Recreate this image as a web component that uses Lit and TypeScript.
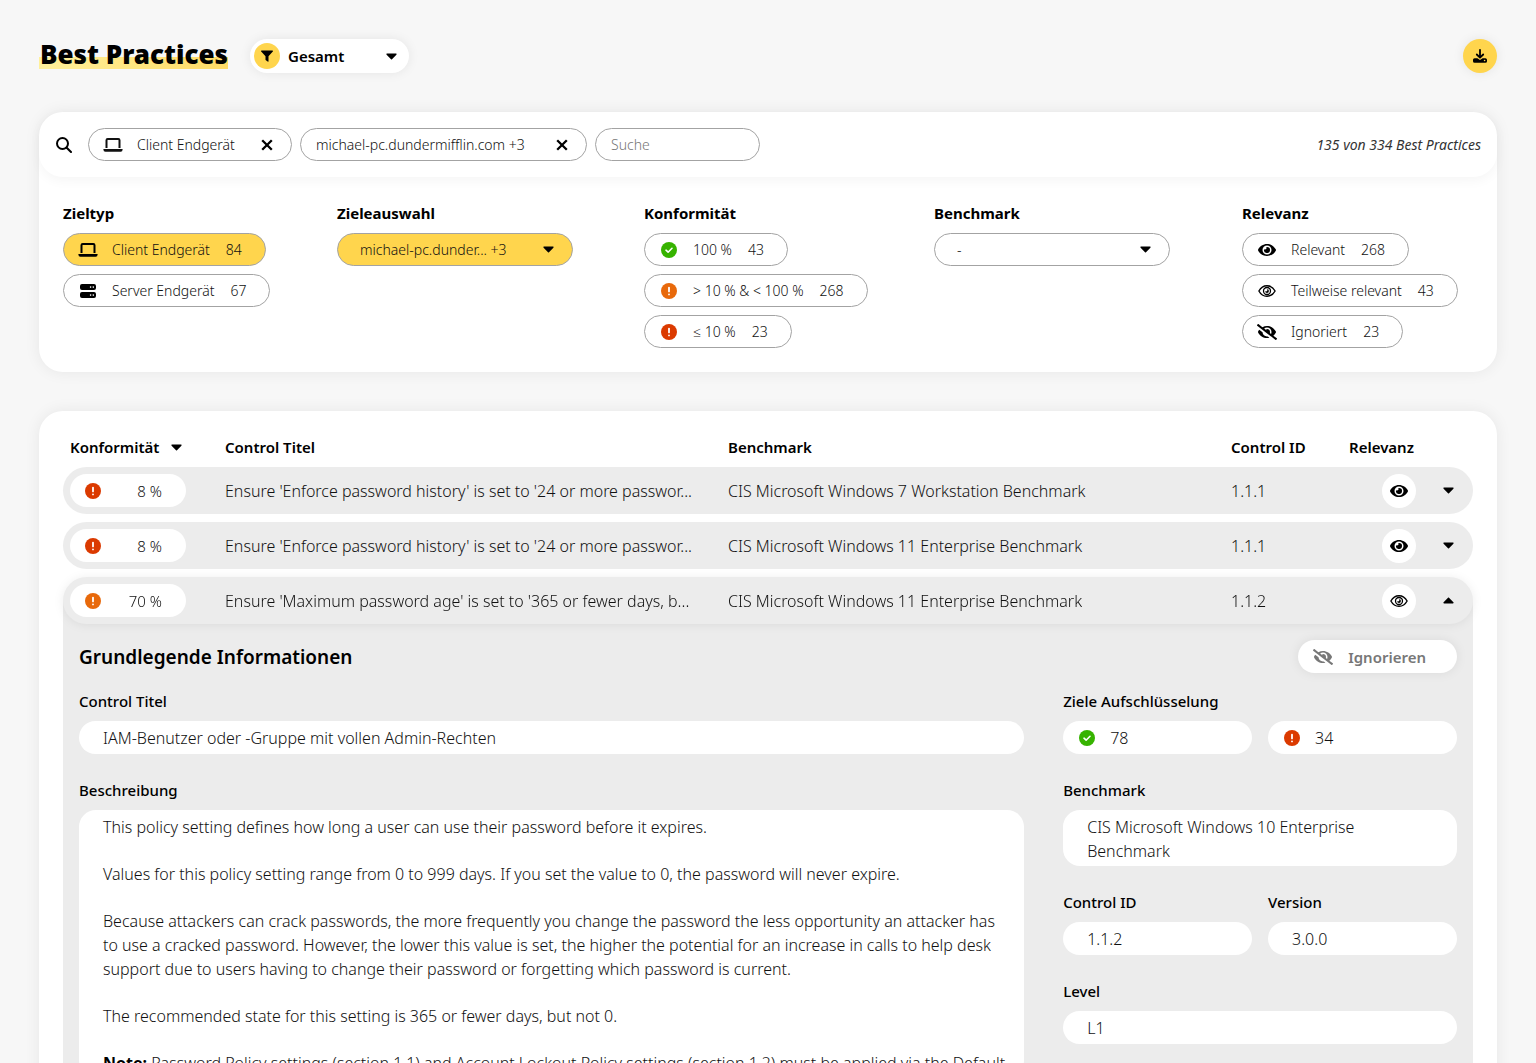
import { LitElement, html, css, svg, nothing, TemplateResult } from "lit";
import { customElement, state } from "lit/decorators.js";
import { classMap } from "lit/directives/class-map.js";

type IconDef = { box: string; w: number; h: number; body: TemplateResult };

const ICONS: Record<string, IconDef> = {
  caretDown: {
    box: "0 176 320 200", w: 11, h: 7,
    body: svg`<path d="M31.3 192h257.3c17.8 0 26.7 21.5 14.1 34.1L174.1 354.8c-7.8 7.8-20.5 7.8-28.3 0L17.2 226.1C4.6 213.5 13.5 192 31.3 192z"/>`,
  },
  caretUp: {
    box: "0 136 320 200", w: 11, h: 7,
    body: svg`<path d="M288.7 320H31.4c-17.8 0-26.7-21.5-14.1-34.1l128.6-128.7c7.8-7.8 20.5-7.8 28.3 0l128.6 128.7c12.6 12.6 3.7 34.1-14.1 34.1z"/>`,
  },
  eye: {
    box: "0 0 576 512", w: 18, h: 16,
    body: svg`<path d="M572.52 241.4C518.29 135.59 410.93 64 288 64S57.68 135.64 3.48 241.41a32.35 32.35 0 0 0 0 29.19C57.71 376.41 165.07 448 288 448s230.32-71.64 284.52-177.41a32.35 32.35 0 0 0 0-29.19zM288 400a144 144 0 1 1 144-144 143.93 143.93 0 0 1-144 144zm0-240a95.31 95.31 0 0 0-25.31 3.79 47.85 47.85 0 0 1-66.9 66.9A95.78 95.78 0 1 0 288 160z"/>`,
  },
  eyeOutline: {
    box: "0 0 18 16", w: 18, h: 16,
    body: svg`<g fill="none" stroke="currentColor"><path stroke-width="1.400" stroke-linejoin="round" d="M.9 8C2.800 4.500 5.600 2.700 9 2.700S15.200 4.500 17.100 8C15.200 11.500 12.400 13.300 9 13.300S2.800 11.500.9 8z"/><circle cx="9" cy="8" r="3.500" stroke-width="1.300"/></g><path d="M9 6.100a1.900 1.900 0 1 1-1.900 1.900A1.300 1.300 0 0 0 9 6.100z"/>`,
  },
  eyeSlash: {
    box: "0 0 640 512", w: 20, h: 16,
    body: svg`<path d="M320 400c-75.85 0-137.25-58.71-142.9-133.11L72.2 185.82c-13.79 17.3-26.48 35.59-36.72 55.59a32.35 32.35 0 0 0 0 29.19C89.71 376.41 197.07 448 320 448c26.91 0 52.87-4 77.89-10.46L346 397.39a144.13 144.13 0 0 1-26 2.61zm313.82 58.1l-110.55-85.44a331.25 331.25 0 0 0 81.25-102.07 32.35 32.35 0 0 0 0-29.19C550.29 135.59 442.93 64 320 64a308.15 308.15 0 0 0-147.32 37.7L45.46 3.37A16 16 0 0 0 23 6.18L3.37 31.45A16 16 0 0 0 6.18 53.9l588.36 454.73a16 16 0 0 0 22.46-2.81l19.64-25.27a16 16 0 0 0-2.82-22.45zm-183.72-142l-39.3-30.38A94.75 94.75 0 0 0 416 256a94.76 94.76 0 0 0-121.31-92.21A47.65 47.65 0 0 1 304 192a46.64 46.64 0 0 1-1.54 10l-73.61-56.89A142.31 142.31 0 0 1 320 112a143.92 143.92 0 0 1 144 144c0 21.63-5.29 41.79-13.9 60.11z"/>`,
  },
  laptop: {
    box: "0 0 20 16", w: 20, h: 16,
    body: svg`<path fill="none" stroke="currentColor" stroke-width="2" d="M3.5 11V3.2q0-1.2 1.2-1.2h10.6q1.2 0 1.2 1.2V11"/><path d="M.4 12h19.2v.6q0 2.2-2 2.2H2.4q-2 0-2-2.2z"/>`,
  },
  server: {
    box: "0 0 16 16", w: 16, h: 16,
    body: svg`<path fill-rule="evenodd" d="M2 1h12a2 2 0 0 1 2 2v2a2 2 0 0 1-2 2H2a2 2 0 0 1-2-2V3a2 2 0 0 1 2-2zm8.6 2.3a.8.8 0 1 0 0 1.6.8.8 0 0 0 0-1.6zm2.7 0a.8.8 0 1 0 0 1.6.8.8 0 0 0 0-1.6zM2 9h12a2 2 0 0 1 2 2v2a2 2 0 0 1-2 2H2a2 2 0 0 1-2-2v-2a2 2 0 0 1 2-2zm8.6 2.3a.8.8 0 1 0 0 1.6.8.8 0 0 0 0-1.6zm2.7 0a.8.8 0 1 0 0 1.6.8.8 0 0 0 0-1.6z"/>`,
  },
  ok: {
    box: "0 0 16 16", w: 16, h: 16,
    body: svg`<circle cx="8" cy="8" r="8" fill="#36b300"/><path fill="none" stroke="#fff" stroke-width="1.6" stroke-linecap="round" stroke-linejoin="round" d="M5 8.2l2.1 2L11 6.3"/>`,
  },
  warn: {
    box: "0 0 16 16", w: 16, h: 16,
    body: svg`<circle cx="8" cy="8" r="8" fill="#e8690b"/><path fill="none" stroke="#fff" stroke-width="1.8" stroke-linecap="round" d="M8 4.6v3.8M8 11.3v.1"/>`,
  },
  bad: {
    box: "0 0 16 16", w: 16, h: 16,
    body: svg`<circle cx="8" cy="8" r="8" fill="#db3a00"/><path fill="none" stroke="#fff" stroke-width="1.8" stroke-linecap="round" d="M8 4.6v3.8M8 11.3v.1"/>`,
  },
  search: {
    box: "0 0 16 16", w: 16, h: 16,
    body: svg`<g fill="none" stroke="currentColor" stroke-width="2"><circle cx="6.5" cy="6.5" r="5.5"/><path stroke-linecap="round" d="M10.7 10.7L15 15"/></g>`,
  },
  close: {
    box: "0 0 12 12", w: 12, h: 12,
    body: svg`<path fill="none" stroke="currentColor" stroke-width="2.3" d="M1.2 1.2l9.6 9.6M10.8 1.2L1.2 10.8"/>`,
  },
  filter: {
    box: "0 0 12 12", w: 12, h: 12,
    body: svg`<path d="M.6.5h10.800c.6 0 .8.700.4 1.100L7.500 6.200v5c0 .5-.5.700-.9.400L4.900 10.300a.8.8 0 0 1-.4-.6V6.200L.2 1.600C-.2 1.200 0 .5.6.5z"/>`,
  },
  download: {
    box: "0 0 16 16", w: 16, h: 16,
    body: svg`<path fill="none" stroke="currentColor" stroke-width="1.8" stroke-linecap="round" stroke-linejoin="round" d="M8 1.8v7.4M4.8 6.5L8 9.6l3.200-3.100"/><path fill-rule="evenodd" d="M2.600 10.200h2.800L8 12l2.600-1.800h2.800a1.600 1.600 0 0 1 1.600 1.600v1.400a1.600 1.600 0 0 1-1.600 1.600H2.600A1.600 1.600 0 0 1 1 13.200v-1.400a1.600 1.600 0 0 1 1.600-1.600zm10 1.500a.8.8 0 1 0 0 1.600.8.8 0 0 0 0-1.600z"/>`,
  },
};

const icon = (name: string) => {
  const i = ICONS[name];
  return html`<svg class="icon" width=${i.w} height=${i.h} viewBox=${i.box} fill="currentColor" aria-hidden="true">${i.body}</svg>`;
};

interface Option { id: string; icon: string; label: string; count: number }

const TARGET_TYPES: Option[] = [
  { id: "client", icon: "laptop", label: "Client Endgerät", count: 84 },
  { id: "server", icon: "server", label: "Server Endgerät", count: 67 },
];
const CONFORMITY: Option[] = [
  { id: "full", icon: "ok", label: "100 %", count: 43 },
  { id: "part", icon: "warn", label: "> 10 % & < 100 %", count: 268 },
  { id: "low", icon: "bad", label: "≤ 10 %", count: 23 },
];
const RELEVANCE: Option[] = [
  { id: "relevant", icon: "eye", label: "Relevant", count: 268 },
  { id: "partial", icon: "eyeOutline", label: "Teilweise relevant", count: 43 },
  { id: "ignored", icon: "eyeSlash", label: "Ignoriert", count: 23 },
];

const ROWS = [
  { status: "bad", value: "8 %", title: "Ensure 'Enforce password history' is set to '24 or more passwor...", benchmark: "CIS Microsoft Windows 7 Workstation Benchmark", id: "1.1.1", eye: "eye" },
  { status: "bad", value: "8 %", title: "Ensure 'Enforce password history' is set to '24 or more passwor...", benchmark: "CIS Microsoft Windows 11 Enterprise Benchmark", id: "1.1.1", eye: "eye" },
  { status: "warn", value: "70 %", title: "Ensure 'Maximum password age' is set to '365 or fewer days, b...", benchmark: "CIS Microsoft Windows 11 Enterprise Benchmark", id: "1.1.2", eye: "eyeOutline" },
];

@customElement("app-root")
export class AppRoot extends LitElement {
  @state() private active = new Set(["client"]);
  @state() private open = 2;

  static styles = css`
    :host {
      display: block;
      min-height: 100vh;
      box-sizing: border-box;
      padding: 39px;
      background: #f7f7f7;
      color: #111;
      font: 300 16px/24px "Noto Sans", "Open Sans", sans-serif;
    }
    * { box-sizing: border-box; }
    button, input, select { font: inherit; color: inherit; margin: 0; }
    button { padding: 0; border: 0; background: none; cursor: pointer; }
    h1, h2, h3, p { margin: 0; }
    .icon { display: block; flex: none; }

    .top { display: flex; align-items: flex-start; gap: 22px; margin-bottom: 39px; }
    h1 {
      padding-left: 1px;
      color: #000;
      font-size: 26px;
      font-weight: 900;
      line-height: 30px;
      background: linear-gradient(90deg, #fff09b, #ffdb66) left bottom / 100% 12px no-repeat;
    }
    .view {
      display: grid;
      width: 159px;
      height: 34px;
      border-radius: 17px;
      background: #fff;
      box-shadow: 0 0 12px rgb(0 0 0 / 8%);
      align-items: center;
    }
    .view > * { grid-area: 1 / 1; }
    .view select { padding: 0 36px 0 38px; font-size: 15px; font-weight: 600; color: #000; }
    .badge {
      display: grid;
      place-items: center;
      width: 26px;
      height: 26px;
      margin-left: 4px;
      border-radius: 50%;
      background: #ffd54d;
      color: #000;
      pointer-events: none;
      z-index: 1;
    }
    .view > .icon { justify-self: end; margin-right: 12px; color: #000; pointer-events: none; }
    select {
      appearance: none;
      width: 100%;
      height: 100%;
      border: 0;
      border-radius: 17px;
      background: none;
    }
    .download {
      display: grid;
      place-items: center;
      width: 34px;
      height: 34px;
      margin-left: auto;
      border-radius: 50%;
      background: #ffd54d;
      color: #000;
      box-shadow: 0 0 12px rgb(0 0 0 / 8%);
    }

    .card { border-radius: 24px; background: #fff; box-shadow: 0 0 16px rgb(0 0 0 / 7%); }
    .filters { margin-bottom: 39px; font-size: 14px; }
    .bar {
      display: flex;
      align-items: center;
      gap: 8px;
      padding: 16px 16px 16px 17px;
      border-radius: 24px;
      box-shadow: 0 4px 12px rgb(0 0 0 / 4%);
    }
    .bar label { display: flex; }
    .bar .lead { margin-right: 8px; color: #000; }
    .chip, .pill {
      display: flex;
      align-items: center;
      height: 33px;
      border: 1px solid #a3a3a3;
      border-radius: 17px;
      white-space: nowrap;
    }
    .chip { gap: 14px; min-width: 204px; padding: 0 18px 0 14px; }
    .chip.wide { min-width: 287px; padding-left: 15px; }
    .chip button { margin-left: auto; color: #000; }
    .search {
      width: 165px;
      height: 33px;
      padding: 0 15px;
      border: 1px solid #a3a3a3;
      border-radius: 17px;
      background: #fff;
      outline-offset: 2px;
    }
    .search::placeholder { color: #777; opacity: 1; }
    .total { margin-left: auto; font-style: italic; font-weight: 400; color: #333; }

    .groups {
      display: grid;
      grid-template-columns: 274fr 307fr 290fr 308fr 231fr;
      padding: 24px;
    }
    .group { display: flex; flex-direction: column; align-items: flex-start; gap: 8px; }
    h2 { color: #000; font-size: 15px; font-weight: 700; line-height: 24px; }
    .pill { gap: 14px; padding: 0 23px 0 14px; }
    .pill.on { background: #ffd54d; }
    .slot { display: grid; place-items: center; width: 20px; color: #000; }
    .count { margin-left: 2px; }
    .pick {
      display: grid;
      align-items: center;
      width: 236px;
      height: 33px;
      border: 1px solid #a3a3a3;
      border-radius: 17px;
    }
    .pick.on { background: #ffd54d; }
    .pick > * { grid-area: 1 / 1; }
    .pick select { padding: 0 40px 0 22px; }
    .pick .icon { justify-self: end; margin-right: 18px; color: #000; pointer-events: none; }

    .list { padding: 16px 24px 24px; }
    table { width: 100%; table-layout: fixed; border-collapse: separate; border-spacing: 0 8px; }
    th, td { padding: 0; text-align: left; white-space: nowrap; }
    th { height: 24px; color: #000; font-size: 15px; font-weight: 600; }
    .c-conf { width: 162px; }
    .c-id { width: 118px; }
    .c-rel { width: 75px; }
    .c-tog { width: 49px; }
    .sort { display: flex; align-items: center; gap: 12px; padding-left: 7px; font-weight: 600; }
    .row td { height: 47px; background: #ececec; }
    .row td:first-child { padding-left: 7px; border-radius: 24px 0 0 24px; }
    .row td:last-child { border-radius: 0 24px 24px 0; }
    .row.open { position: relative; z-index: 1; filter: drop-shadow(0 1px 5px rgb(0 0 0 / 7%)); }
    .score {
      display: flex;
      align-items: center;
      justify-content: space-between;
      width: 116px;
      height: 33px;
      padding: 0 24px 0 15px;
      border-radius: 17px;
      background: #fff;
      font-size: 15px;
    }
    .eye {
      display: grid;
      place-items: center;
      width: 34px;
      height: 34px;
      margin: 0 8px 0 auto;
      border-radius: 50%;
      background: #fff;
      color: #000;
    }
    .toggle { display: grid; place-items: center; width: 49px; height: 33px; color: #000; }

    .detail { margin-top: -32px; padding: 40px 16px 16px; background: #ececec; white-space: normal; }
    .detail-head { display: flex; align-items: center; justify-content: space-between; margin-bottom: 16px; }
    h3 { color: #000; font-size: 19px; font-weight: 600; line-height: 24px; }
    .ignore {
      display: flex;
      align-items: center;
      gap: 15px;
      height: 33px;
      padding: 0 31px 0 15px;
      border-radius: 17px;
      background: #fff;
      color: #777;
      font-size: 15px;
      font-weight: 600;
      box-shadow: 0 0 12px rgb(0 0 0 / 8%);
    }
    .cols { display: grid; grid-template-columns: minmax(0, 12fr) minmax(0, 5fr); column-gap: 39px; align-items: start; }
    .stack { display: grid; gap: 24px; }
    .pair { display: grid; grid-template-columns: 1fr 1fr; gap: 16px; }
    .field { display: grid; gap: 8px; }
    .field > label, .caption { color: #000; font-size: 15px; font-weight: 500; line-height: 24px; }
    .field input, .metric {
      width: 100%;
      height: 33px;
      padding: 0 24px;
      border: 0;
      border-radius: 17px;
      background: #fff;
    }
    .metric { display: flex; align-items: center; gap: 15px; padding: 0 16px; }
    .box { padding: 5px 24px 3px; border-radius: 17px; background: #fff; }
    .prose { display: grid; gap: 23px; padding-right: 12px; }
    .prose b { font-weight: 700; color: #000; }
  `;

  private flip(id: string) {
    const next = new Set(this.active);
    next.has(id) ? next.delete(id) : next.add(id);
    this.active = next;
  }

  private pill = (o: Option) => html`
    <button
      class=${classMap({ pill: true, on: this.active.has(o.id) })}
      aria-pressed=${this.active.has(o.id) ? "true" : "false"}
      @click=${() => this.flip(o.id)}
    >
      <span class="slot">${icon(o.icon)}</span><span>${o.label}</span><span class="count">${o.count}</span>
    </button>`;

  private field(id: string, label: string, value: string) {
    return html`<div class="field">
      <label for=${id}>${label}</label>
      <input id=${id} type="text" readonly .value=${value} />
    </div>`;
  }

  private detail() {
    return html`<tr><td colspan="6"><div class="detail">
      <div class="detail-head">
        <h3>Grundlegende Informationen</h3>
        <button class="ignore">${icon("eyeSlash")}<span>Ignorieren</span></button>
      </div>
      <div class="cols">
        <div class="stack">
          ${this.field("title", "Control Titel", "IAM-Benutzer oder -Gruppe mit vollen Admin-Rechten")}
          <div class="field">
            <div class="caption">Beschreibung</div>
            <div class="box prose">
              <p>This policy setting defines how long a user can use their password before it expires.</p>
              <p>Values for this policy setting range from 0 to 999 days. If you set the value to 0, the password will never expire.</p>
              <p>Because attackers can crack passwords, the more frequently you change the password the less opportunity an attacker has to use a cracked password. However, the lower this value is set, the higher the potential for an increase in calls to help desk support due to users having to change their password or forgetting which password is current.</p>
              <p>The recommended state for this setting is 365 or fewer days, but not 0.</p>
              <p><b>Note:</b> Password Policy settings (section 1.1) and Account Lockout Policy settings (section 1.2) must be applied via the Default</p>
            </div>
          </div>
        </div>
        <div class="stack">
          <div class="field">
            <div class="caption">Ziele Aufschlüsselung</div>
            <div class="pair">
              <div class="metric">${icon("ok")}<span>78</span></div>
              <div class="metric">${icon("bad")}<span>34</span></div>
            </div>
          </div>
          <div class="field">
            <div class="caption">Benchmark</div>
            <div class="box">CIS Microsoft Windows 10 Enterprise<br />Benchmark</div>
          </div>
          <div class="pair">
            ${this.field("cid", "Control ID", "1.1.2")}
            ${this.field("version", "Version", "3.0.0")}
          </div>
          ${this.field("level", "Level", "L1")}
        </div>
      </div>
    </div></td></tr>`;
  }

  render() {
    return html`
      <header class="top">
        <h1>Best Practices</h1>
        <div class="view">
          <span class="badge">${icon("filter")}</span>
          <select aria-label="Ansicht"><option>Gesamt</option></select>
          ${icon("caretDown")}
        </div>
        <button class="download" aria-label="Herunterladen">${icon("download")}</button>
      </header>

      <section class="card filters">
        <div class="bar">
          <label class="lead" for="search" aria-label="Suche">${icon("search")}</label>
          <div class="chip">
            ${icon("laptop")}<span>Client Endgerät</span>
            <button aria-label="Entfernen">${icon("close")}</button>
          </div>
          <div class="chip wide">
            <span>michael-pc.dundermifflin.com +3</span>
            <button aria-label="Entfernen">${icon("close")}</button>
          </div>
          <input class="search" id="search" type="text" placeholder="Suche" />
          <span class="total">135 von 334 Best Practices</span>
        </div>
        <div class="groups">
          <div class="group"><h2>Zieltyp</h2>${TARGET_TYPES.map(this.pill)}</div>
          <div class="group">
            <h2>Zieleauswahl</h2>
            <div class="pick on">
              <select aria-label="Zieleauswahl"><option>michael-pc.dunder... +3</option></select>
              ${icon("caretDown")}
            </div>
          </div>
          <div class="group"><h2>Konformität</h2>${CONFORMITY.map(this.pill)}</div>
          <div class="group">
            <h2>Benchmark</h2>
            <div class="pick">
              <select aria-label="Benchmark"><option>-</option></select>
              ${icon("caretDown")}
            </div>
          </div>
          <div class="group"><h2>Relevanz</h2>${RELEVANCE.map(this.pill)}</div>
        </div>
      </section>

      <section class="card list">
        <table>
          <thead>
            <tr>
              <th class="c-conf"><button class="sort">Konformität ${icon("caretDown")}</button></th>
              <th>Control Titel</th>
              <th>Benchmark</th>
              <th class="c-id">Control ID</th>
              <th class="c-rel">Relevanz</th>
              <th class="c-tog"></th>
            </tr>
          </thead>
          <tbody>
            ${ROWS.map((r, i) => html`
              <tr class=${classMap({ row: true, open: this.open === i })}>
                <td><div class="score">${icon(r.status)}<span>${r.value}</span></div></td>
                <td>${r.title}</td>
                <td>${r.benchmark}</td>
                <td>${r.id}</td>
                <td><span class="eye">${icon(r.eye)}</span></td>
                <td>
                  <button class="toggle" aria-label="Details" aria-expanded=${this.open === i ? "true" : "false"}
                    @click=${() => (this.open = this.open === i ? -1 : i)}>
                    ${icon(this.open === i ? "caretUp" : "caretDown")}
                  </button>
                </td>
              </tr>
              ${this.open === i ? this.detail() : nothing}
            `)}
          </tbody>
        </table>
      </section>
    `;
  }
}
